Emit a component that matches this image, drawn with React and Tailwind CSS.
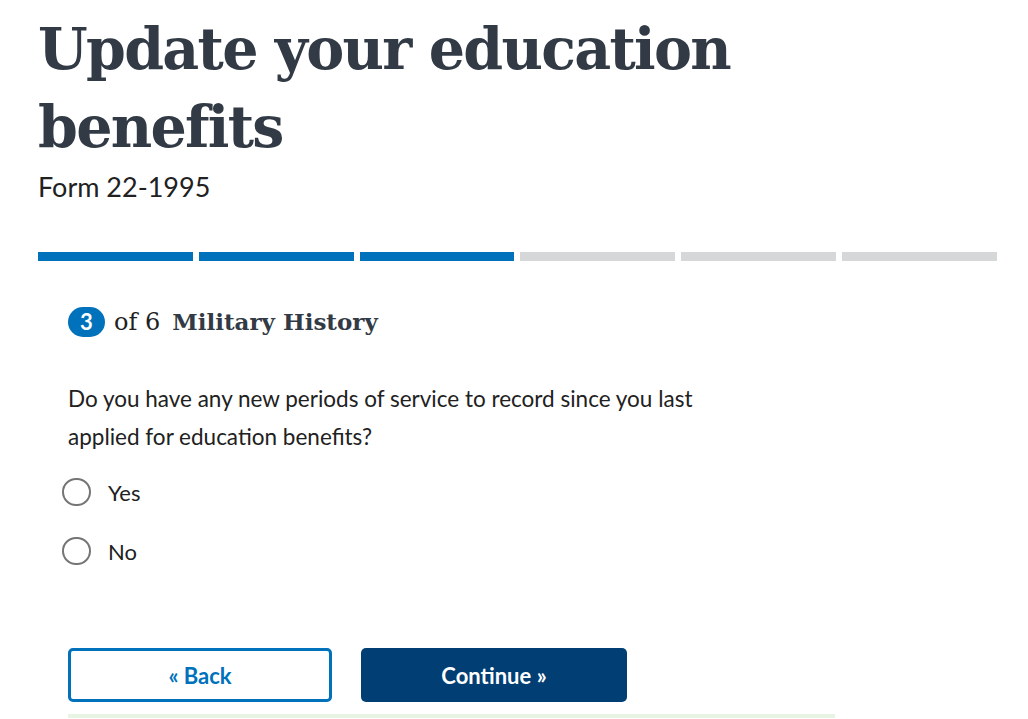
import { useState } from "react";

const SEGMENTS = [true, true, true, false, false, false];

function Radio({ label, checked, onChange }) {
  return (
    <label className="flex h-[44px] cursor-pointer items-center">
      <input
        type="radio"
        name="newService"
        checked={checked}
        onChange={onChange}
        className="sr-only"
      />
      <span className="box-border grid h-[28px] w-[29px] place-items-center rounded-full border-2 border-[#757575] bg-white">
        {checked && <span className="h-[14px] w-[14px] rounded-full bg-[#0071bb]" />}
      </span>
      <span className="ml-[17px] text-[22px] text-[#212121]">{label}</span>
    </label>
  );
}

export default function App() {
  const [answer, setAnswer] = useState(null);

  return (
    <main
      className="min-h-[719px] overflow-hidden bg-white pl-[38px] pr-[31px] text-[#212121]"
      style={{ fontFamily: "Lato, 'Open Sans', sans-serif" }}
    >
      <h1
        className="pt-[10px] text-[57px] font-bold leading-[78px] tracking-[-0.03em] text-[#323a45]"
        style={{ fontFamily: "'DejaVu Serif', serif" }}
      >
        Update your education
        <br />
        benefits
      </h1>
      <p className="mt-[4px] text-[27px] leading-[34px] text-[#212121]">Form 22-1995</p>

      <div className="mt-[48px] flex gap-[6px]">
        {SEGMENTS.map((done, i) => (
          <div
            key={i}
            className={`h-[9px] flex-1 ${done ? "bg-[#0071bb]" : "bg-[#d6d7d9]"}`}
          />
        ))}
      </div>

      <div className="pl-[30px]">
        <div className="mt-[43px] flex items-center">
          <span className="grid h-[30px] w-[37px] place-items-center rounded-full bg-[#0071bb] text-[22px] font-bold leading-none text-white">
            3
          </span>
          <span className="ml-[9px] text-[24px] text-[#212121]" style={{ fontFamily: "'DejaVu Serif', serif" }}>
            of 6
          </span>
          <span
            className="ml-[12px] text-[23px] font-bold text-[#323a45]"
            style={{ fontFamily: "'DejaVu Serif', serif" }}
          >
            Military History
          </span>
        </div>

        <p className="mt-[40px] max-w-[640px] text-[22.5px] leading-[38px] text-[#212121]">
          Do you have any new periods of service to record since you last applied for education
          benefits?
        </p>

        <div className="-ml-[6px] mt-[14px] flex flex-col gap-[15px]">
          <Radio label="Yes" checked={answer === "yes"} onChange={() => setAnswer("yes")} />
          <Radio label="No" checked={answer === "no"} onChange={() => setAnswer("no")} />
        </div>

        <div className="mt-[75px] flex gap-[29px]">
          <button className="h-[54px] w-[264px] rounded-[5px] border-[3px] border-[#0071bb] bg-white text-[22px] font-bold text-[#0071bb]">
            « Back
          </button>
          <button className="h-[54px] w-[266px] rounded-[5px] bg-[#003e73] text-[22px] font-bold text-white">
            Continue »
          </button>
        </div>

        <div className="mt-[12px] h-[4px] w-[767px] bg-[#e7f4e4]" />
      </div>
    </main>
  );
}
